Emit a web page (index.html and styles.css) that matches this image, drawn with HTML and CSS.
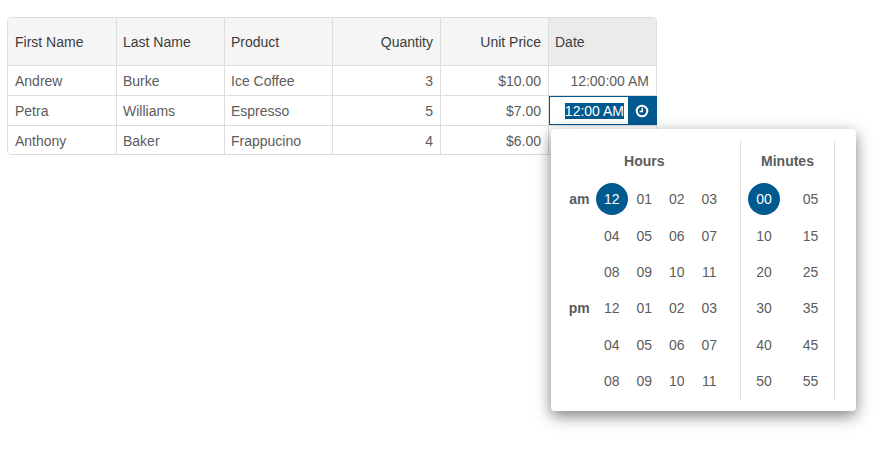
FILE: index.html
```html
<!DOCTYPE html>
<html lang="en">
  <head>
    <meta charset="UTF-8" />
    <title>Grid time picker</title>
    <link rel="stylesheet" href="styles.css">
  </head>
  <body>
    <div class="grid">
      <table class="table">
        <thead>
          <tr>
            <th>First Name</th>
            <th>Last Name</th>
            <th>Product</th>
            <th class="num">Quantity</th>
            <th class="num">Unit Price</th>
            <th class="sorted">Date</th>
          </tr>
        </thead>
        <tbody>
          <tr>
            <td>Andrew</td>
            <td>Burke</td>
            <td>Ice Coffee</td>
            <td class="num">3</td>
            <td class="num">$10.00</td>
            <td class="num">12:00:00 AM</td>
          </tr>
          <tr>
            <td>Petra</td>
            <td>Williams</td>
            <td>Espresso</td>
            <td class="num">5</td>
            <td class="num">$7.00</td>
            <td class="edit-cell">
              <div class="editor">
                <div class="editor-value"><span class="selected">12:00 AM</span></div>
                <div class="editor-btn">
                  <svg class="clock" width="14" height="14" viewBox="0 0 14 14">
                    <circle cx="7" cy="7" r="5.3" fill="none" stroke="#fff" stroke-width="2" />
                    <path d="M7.3 3.8V7.5H4.6" fill="none" stroke="#fff" stroke-width="1.4" />
                  </svg>
                </div>
              </div>
            </td>
          </tr>
          <tr>
            <td>Anthony</td>
            <td>Baker</td>
            <td>Frappucino</td>
            <td class="num">4</td>
            <td class="num">$6.00</td>
            <td></td>
          </tr>
        </tbody>
      </table>

      <div class="popup">
        <div class="hours">
          <div class="title">Hours</div>
          <div class="label">am</div>
          <div class="cell"><span class="active">12</span></div>
          <div class="cell">01</div>
          <div class="cell">02</div>
          <div class="cell">03</div>
          <div class="label"></div>
          <div class="cell">04</div>
          <div class="cell">05</div>
          <div class="cell">06</div>
          <div class="cell">07</div>
          <div class="label"></div>
          <div class="cell">08</div>
          <div class="cell">09</div>
          <div class="cell">10</div>
          <div class="cell">11</div>
          <div class="label">pm</div>
          <div class="cell">12</div>
          <div class="cell">01</div>
          <div class="cell">02</div>
          <div class="cell">03</div>
          <div class="label"></div>
          <div class="cell">04</div>
          <div class="cell">05</div>
          <div class="cell">06</div>
          <div class="cell">07</div>
          <div class="label"></div>
          <div class="cell">08</div>
          <div class="cell">09</div>
          <div class="cell">10</div>
          <div class="cell">11</div>
        </div>
        <div class="minutes">
          <div class="title">Minutes</div>
          <div class="cell"><span class="active">00</span></div>
          <div class="cell">05</div>
          <div class="cell">10</div>
          <div class="cell">15</div>
          <div class="cell">20</div>
          <div class="cell">25</div>
          <div class="cell">30</div>
          <div class="cell">35</div>
          <div class="cell">40</div>
          <div class="cell">45</div>
          <div class="cell">50</div>
          <div class="cell">55</div>
        </div>
      </div>
    </div>
  </body>
</html>
```

FILE: styles.css
```css
body {
  box-sizing: border-box;
  min-height: 473px;
  margin: 0;
  padding: 17px 0 0 7px;
  font-family: "Liberation Sans", Arial, sans-serif;
  font-size: 14px;
  color: #5c5c5c;
  background-color: #fff;
}

.grid {
  position: relative;
  box-sizing: border-box;
  width: 650px;
  height: 138px;
  border: 1px solid #ddd;
  border-radius: 4px;
}

.table {
  width: 648px;
  border-collapse: separate;
  border-spacing: 0;
  table-layout: fixed;
}

.table th,
.table td {
  box-sizing: border-box;
  padding: 0 7px 0 6px;
  border-right: 1px solid #ddd;
  border-bottom: 1px solid #ddd;
  text-align: left;
  font-weight: normal;
  white-space: nowrap;
}

.table th {
  height: 48px;
  color: #3c3c3c;
  background-color: #f5f5f5;
}

.table td {
  height: 30px;
}

.table th:first-child,
.table td:first-child {
  width: 109px;
  padding-left: 7px;
}

.table th:first-child {
  border-top-left-radius: 3px;
}

.table th:last-child {
  border-top-right-radius: 3px;
}

.table th:last-child,
.table td:last-child {
  width: 107px;
  border-right: 0;
}

.table tbody tr:last-child td {
  height: 28px;
  padding-top: 2px;
  border-bottom: 0;
}

.table .num {
  text-align: right;
}

.table .sorted {
  background-color: #ebebeb;
}

.table .edit-cell {
  padding: 0;
}

.editor {
  display: flex;
  box-sizing: border-box;
  height: 29px;
  margin-right: -1px;
  border: 1px solid #00598f;
}

.editor-value {
  flex: 1;
  padding-right: 4px;
  line-height: 28px;
  text-align: right;
}

.selected {
  color: #fff;
  background-color: #00598f;
}

.editor-btn {
  display: flex;
  align-items: center;
  justify-content: center;
  width: 28px;
  background-color: #00598f;
}

.popup {
  position: absolute;
  top: 111px;
  left: 543px;
  display: flex;
  box-sizing: border-box;
  width: 305px;
  height: 282px;
  padding: 12px 21px 12px 12px;
  background-color: #fff;
  border-radius: 4px;
  box-shadow: 0 5px 15px rgba(0, 0, 0, 0.5);
}

.hours {
  display: grid;
  grid-template-columns: repeat(5, 32.5px);
  grid-template-rows: 40px repeat(6, 36.4px);
  width: 178px;
  border-right: 1px solid #ddd;
}

.minutes {
  display: grid;
  grid-template-columns: 46px 47px;
  grid-template-rows: 40px repeat(6, 36.4px);
  width: 93px;
  border-right: 1px solid #ddd;
}

.title {
  grid-column: 1 / -1;
  align-self: center;
  text-align: center;
  font-weight: bold;
}

.label {
  display: flex;
  align-items: center;
  justify-content: center;
  font-weight: bold;
}

.cell {
  display: flex;
  align-items: center;
  justify-content: center;
}

.active {
  display: flex;
  align-items: center;
  justify-content: center;
  width: 32px;
  height: 32px;
  border-radius: 50%;
  color: #fff;
  background-color: #00598f;
}
```
